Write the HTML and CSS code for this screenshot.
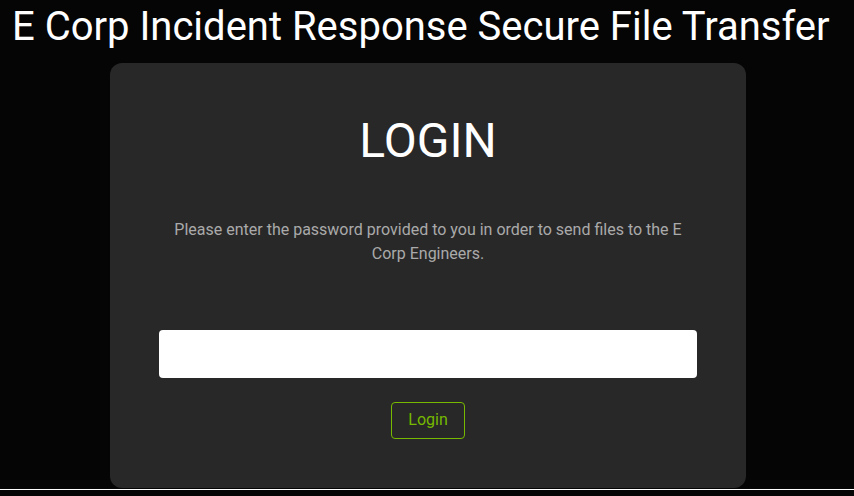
FILE: index.html
```html
<!DOCTYPE html>
<html>
<head>
<meta charset="utf-8">
<link rel="stylesheet" href="styles.css">
</head>
<body>
<h1 class="site-title">E Corp Incident Response Secure File Transfer</h1>
<main class="card">
  <h2 class="card-title">LOGIN</h2>
  <p class="card-text">Please enter the password provided to you in order to send files to the E Corp Engineers.</p>
  <form class="login-form">
    <input class="password" type="password">
    <button class="btn" type="button">Login</button>
  </form>
</main>
<div class="rule"></div>
</body>
</html>
```
FILE: styles.css
```css
html, body {
  margin: 0;
  padding: 0;
  background: #050505;
  font-family: Roboto, "Noto Sans", sans-serif;
}
body {
  display: flex;
  flex-direction: column;
  align-items: stretch;
  padding-left: 2px;
}
.site-title {
  margin: 0;
  padding: 3px 0 0 10px;
  font-size: 40px;
  font-weight: 400;
  line-height: 47px;
  color: #ffffff;
  white-space: nowrap;
}
.card {
  align-self: center;
  margin: 13px 0 0 0;
  width: 636px;
  box-sizing: border-box;
  padding: 49px 49px 49px 49px;
  background: #282828;
  border-radius: 12px;
  display: flex;
  flex-direction: column;
  align-items: center;
}
.card-title {
  margin: 0;
  font-size: 48px;
  font-weight: 400;
  line-height: 57.6px;
  color: #ffffff;
}
.card-text {
  margin: 48px 0 0 0;
  max-width: 520px;
  font-size: 16px;
  line-height: 24px;
  color: #aaaaaa;
  text-align: center;
}
.login-form {
  margin-top: 64px;
  width: 100%;
  display: flex;
  flex-direction: column;
  align-items: center;
  gap: 24px;
}
.password {
  width: 100%;
  height: 48px;
  box-sizing: border-box;
  border: none;
  border-radius: 4px;
  background: #ffffff;
  outline: none;
}
.btn {
  height: 37px;
  box-sizing: border-box;
  padding: 0 16px;
  border: 1px solid #76b900;
  border-radius: 4px;
  background: transparent;
  color: #76b900;
  font-family: Roboto, sans-serif;
  font-size: 16px;
  line-height: 24px;
}
.rule {
  height: 1px;
  margin: 1px 0 0 -2px;
  background: #ffffff;
}
```
